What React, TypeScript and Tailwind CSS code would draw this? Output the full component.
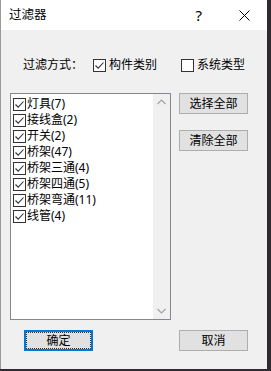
import React from 'react'

const font = { fontFamily: '"Noto Sans", "Noto Sans CJK SC", sans-serif' }

const Check = ({ checked }: { checked: boolean }) => (
  <span className="w-[13px] h-[13px] shrink-0 border border-[#333333] bg-white flex items-center justify-center">
    {checked && (
      <svg width="11" height="11" viewBox="0 0 11 11">
        <path d="M1.5 5.5 L4.2 8.2 L9.5 2.5" fill="none" stroke="#333333" strokeWidth="1.1" />
      </svg>
    )}
  </span>
)

const items = ['灯具(7)', '接线盒(2)', '开关(2)', '桥架(47)', '桥架三通(4)', '桥架四通(5)', '桥架弯通(11)', '线管(4)']

const Btn = ({ label, focus }: { label: string; focus?: boolean }) => (
  <button
    className={
      'w-[69px] h-[21px] text-[12px] text-black bg-[#e1e1e1] flex items-center justify-center ' +
      (focus ? 'border-2 border-[#0078d7]' : 'border border-[#adadad]')
    }
  >
    {focus ? (
      <span className="w-full h-full border border-dotted border-[#333] flex items-center justify-center leading-none">{label}</span>
    ) : (
      <span className="leading-none">{label}</span>
    )}
  </button>
)

const App = () => {
  return (
    <div className="w-[271px] h-[371px] bg-[#2e2a30] overflow-hidden" style={font}>
      <div className="w-[267px] h-[369px] bg-[#f0f0f0] flex flex-col border-l border-[#9a9a9a]">
        <div className="h-[30px] bg-white flex items-center shrink-0">
          <span className="pl-[8px] text-[12.5px] text-black">过滤器</span>
          <span className="ml-auto mr-[37px] text-[15px] text-black">?</span>
          <svg width="11" height="11" viewBox="0 0 11 11" className="mr-[17px]">
            <path d="M0.5 0.5 L10.5 10.5 M10.5 0.5 L0.5 10.5" stroke="#000" strokeWidth="1" />
          </svg>
        </div>

        <div className="flex items-center h-[20px] mt-[25px] text-[12px] text-black">
          <span className="pl-[22px] w-[92px]">过滤方式：</span>
          <Check checked />
          <span className="ml-[3px] w-[72px]">构件类别</span>
          <Check checked={false} />
          <span className="ml-[3px]">系统类型</span>
        </div>

        <div className="flex mt-[18px] pl-[9px]">
          <div className="w-[161px] h-[227px] bg-white border border-[#828790] flex">
            <div className="flex-1 pt-[2px] pl-[2px]">
              {items.map((t) => (
                <div key={t} className="h-[16px] flex items-center gap-[1px] text-[12px] text-black">
                  <Check checked />
                  <span className="leading-none">{t}</span>
                </div>
              ))}
            </div>
            <div className="w-[17px] bg-[#f0f0f0] flex flex-col justify-between items-center py-[5px]">
              <svg width="9" height="6" viewBox="0 0 9 6">
                <path d="M0.5 5 L4.5 1 L8.5 5" fill="none" stroke="#a3a3a3" strokeWidth="1.2" />
              </svg>
              <svg width="9" height="6" viewBox="0 0 9 6">
                <path d="M0.5 1 L4.5 5 L8.5 1" fill="none" stroke="#a3a3a3" strokeWidth="1.2" />
              </svg>
            </div>
          </div>
          <div className="ml-[8px] flex flex-col gap-[16px]">
            <Btn label="选择全部" />
            <Btn label="清除全部" />
          </div>
        </div>

        <div className="flex mt-[10px] pl-[23px]">
          <Btn label="确定" focus />
          <div className="ml-[86px]">
            <Btn label="取消" />
          </div>
        </div>
      </div>
    </div>
  )
}

export default App
